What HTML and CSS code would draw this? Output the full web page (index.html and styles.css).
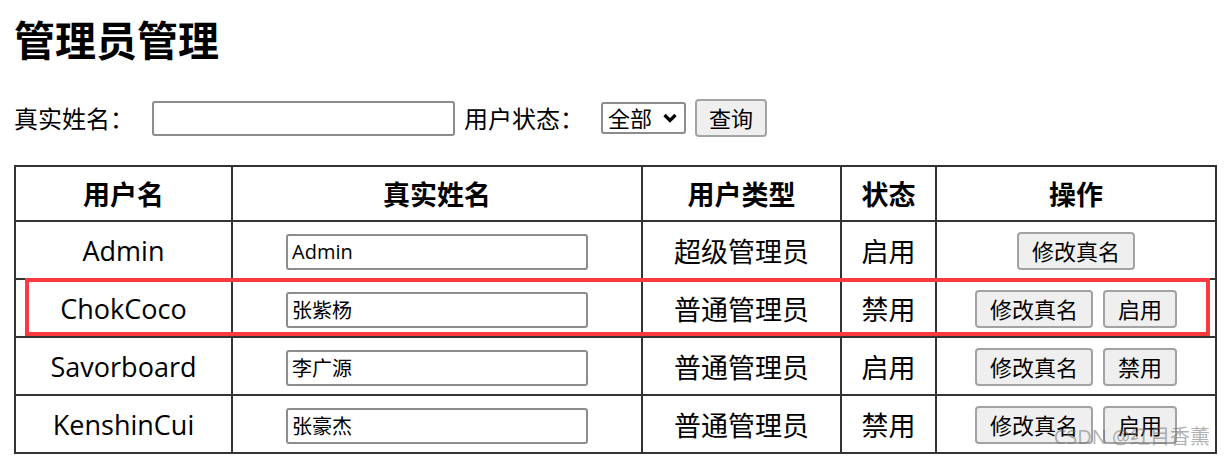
FILE: index.html
```html
<!DOCTYPE html>
<html lang="zh-CN">
<head>
    <meta charset="UTF-8">
    <title>管理员管理</title>
    <link rel="stylesheet" href="styles.css">
</head>
<body>
    <h1 class="page-title">管理员管理</h1>

    <!-- search bar -->
    <div class="search-bar">
        <span class="search-label">真实姓名：</span>
        <input type="text" class="search-input">
        <span class="search-label status-label">用户状态：</span>
        <span class="select-wrap">
            <select class="status-select">
                <option>全部</option>
                <option>启用</option>
                <option>禁用</option>
            </select>
            <svg class="select-arrow" width="14" height="10" viewBox="0 0 14 10">
                <path d="M1.5 2 L7 7.5 L12.5 2" fill="none" stroke="#000" stroke-width="3.2"/>
            </svg>
        </span>
        <button class="btn search-btn">查询</button>
    </div>

    <div class="table-wrap">
        <table class="admin-table">
            <colgroup>
                <col style="width: 217px">
                <col style="width: 410px">
                <col style="width: 199px">
                <col style="width: 95px">
                <col style="width: 280px">
            </colgroup>
            <thead>
                <tr>
                    <th>用户名</th>
                    <th>真实姓名</th>
                    <th>用户类型</th>
                    <th>状态</th>
                    <th>操作</th>
                </tr>
            </thead>
            <tbody>
                <tr>
                    <td>Admin</td>
                    <td><input type="text" class="name-input" value="Admin"></td>
                    <td>超级管理员</td>
                    <td>启用</td>
                    <td><button class="btn">修改真名</button></td>
                </tr>
                <tr>
                    <td>ChokCoco</td>
                    <td><input type="text" class="name-input" value="张紫杨"></td>
                    <td>普通管理员</td>
                    <td>禁用</td>
                    <td><button class="btn">修改真名</button><button class="btn">启用</button></td>
                </tr>
                <tr>
                    <td>Savorboard</td>
                    <td><input type="text" class="name-input" value="李广源"></td>
                    <td>普通管理员</td>
                    <td>启用</td>
                    <td><button class="btn">修改真名</button><button class="btn">禁用</button></td>
                </tr>
                <tr>
                    <td>KenshinCui</td>
                    <td><input type="text" class="name-input" value="张豪杰"></td>
                    <td>普通管理员</td>
                    <td>禁用</td>
                    <td><button class="btn">修改真名</button><button class="btn">启用</button></td>
                </tr>
            </tbody>
        </table>

        <!-- red highlight drawn over the second row -->
        <div class="row-highlight"></div>
    </div>

    <div class="watermark">CSDN @红目香薰</div>
</body>
</html>
```

FILE: styles.css
```css
body {
    margin: 0;
    padding: 0 14px;
    font-family: "Open Sans", "Noto Sans CJK SC", sans-serif;
    font-size: 24px;
    color: #000;
    background-color: #fff;
    position: relative;
    height: 456px;
    overflow: hidden;
}

.page-title {
    font-family: "Noto Sans CJK SC", sans-serif;
    font-size: 41px;
    font-weight: bold;
    line-height: 50px;
    margin: 13px 0 0;
}

.search-bar {
    display: flex;
    align-items: center;
    margin-top: 36px;
    height: 38px;
}

.search-label {
    font-family: "Noto Sans CJK SC", sans-serif;
    font-size: 24px;
    line-height: 38px;
}

.search-input {
    box-sizing: border-box;
    width: 303px;
    height: 35px;
    margin-left: 18px;
    border: 2px solid #8c8c8c;
    border-radius: 3px;
    font-size: 20px;
}

.status-label {
    margin-left: 9px;
}

.select-wrap {
    position: relative;
    display: inline-flex;
    margin-left: 17px;
}

.status-select {
    appearance: none;
    box-sizing: border-box;
    width: 85px;
    height: 32px;
    padding: 0 0 3px 5px;
    border: 2px solid #8c8c8c;
    border-radius: 3px;
    background: #fff;
    font-family: "Noto Sans CJK SC", sans-serif;
    font-size: 22px;
    line-height: 26px;
    color: #000;
}

.select-arrow {
    position: absolute;
    right: 9px;
    top: 11px;
    pointer-events: none;
}

.btn {
    box-sizing: border-box;
    height: 38px;
    padding: 0 13px 2px;
    border: 2px solid #a3a3a3;
    border-radius: 4px;
    background-color: #efefef;
    font-family: "Noto Sans CJK SC", sans-serif;
    font-size: 22px;
    color: #000;
    vertical-align: middle;
}

.search-btn {
    margin-left: 9px;
    padding: 0 12px 2px;
}

.table-wrap {
    position: relative;
    margin-top: 28px;
}

.admin-table {
    width: 1201px;
    table-layout: fixed;
    border-collapse: collapse;
}

.admin-table th,
.admin-table td {
    border: 2px solid #333;
    text-align: center;
    padding: 0;
    font-size: 27px;
}

.admin-table th {
    height: 53px;
    font-family: "Noto Sans CJK SC", sans-serif;
    font-weight: bold;
}

.admin-table td {
    height: 56px;
}

.name-input {
    box-sizing: border-box;
    width: 302px;
    height: 36px;
    padding: 0 4px;
    border: 2px solid #8c8c8c;
    border-radius: 3px;
    font-family: "Open Sans", "Noto Sans CJK SC", sans-serif;
    font-size: 20px;
    vertical-align: middle;
}

.admin-table .btn + .btn {
    margin-left: 10px;
}

.row-highlight {
    position: absolute;
    left: 11px;
    top: 113px;
    width: 1185px;
    height: 58px;
    box-sizing: border-box;
    border: 4px solid #fb3a3f;
    pointer-events: none;
}

.watermark {
    position: absolute;
    right: 16px;
    bottom: 6px;
    font-family: "Open Sans", "Noto Sans CJK SC", sans-serif;
    font-size: 20px;
    color: rgba(110, 110, 110, 0.55);
}
```
